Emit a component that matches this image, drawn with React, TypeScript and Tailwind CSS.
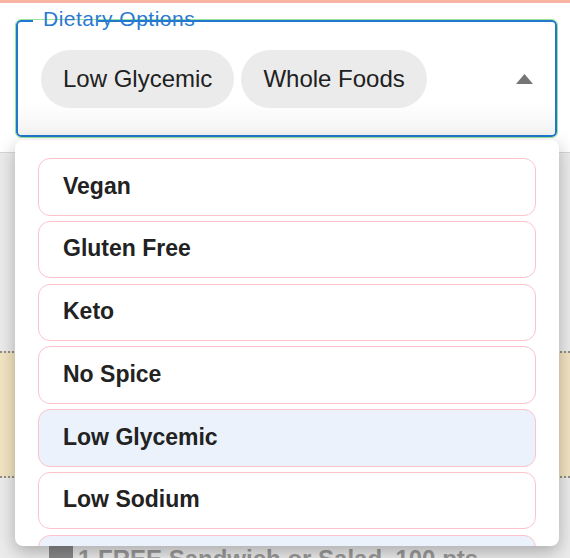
import React from "react";

const items = [
  { label: "Vegan", selected: false },
  { label: "Gluten Free", selected: false },
  { label: "Keto", selected: false },
  { label: "No Spice", selected: false },
  { label: "Low Glycemic", selected: true },
  { label: "Low Sodium", selected: false },
  { label: "Whole Foods", selected: true },
];

export default function App() {
  return (
    <div
      className="relative w-[570px] h-[558px] overflow-hidden bg-white flex flex-col"
      style={{ fontFamily: '"Liberation Sans", Arial, sans-serif' }}
    >
      {/* top accent */}
      <div className="h-[3px] bg-[#f9b5a3] shrink-0" />

      {/* select field */}
      <div className="pl-[16px] pr-[13px] pt-[17px] shrink-0">
        <div className="relative h-[117px] rounded-[5px] border-2 border-[#1f77d0] outline outline-1 outline-[#9be39b] bg-[linear-gradient(to_bottom,#ffffff_72%,#f3f3f3)] flex items-center pl-[23px] pr-[22px] gap-[7px]">
          <span className="absolute top-[-2px] left-[15px] w-[65px] h-[2px] bg-white" />
          <span className="absolute top-[-15px] left-[25px] text-[21px] leading-[24px] tracking-[0.5px] text-[#2a7ad0]">
            Dietary Options
          </span>
          <div className="h-[58px] px-[22px] rounded-full bg-[#ebebeb] flex items-center text-[24px] text-[#212121]">
            Low Glycemic
          </div>
          <div className="h-[58px] px-[22px] rounded-full bg-[#ebebeb] flex items-center text-[24px] text-[#212121]">
            Whole Foods
          </div>
          <svg className="ml-auto" width="17" height="10" viewBox="0 0 17 10">
            <polygon points="0,10 8.5,0 17,10" fill="#757575" />
          </svg>
        </div>
      </div>

      {/* page behind */}
      <div className="h-[15px] shrink-0" />
      <div className="flex-1 flex flex-col border-t border-[#d6d6d6] bg-[#ececec]">
        <div className="h-[198px] shrink-0" />
        <div className="h-[127px] shrink-0 bg-[#f3e5c2] border-y-2 border-dotted border-[#8f8f8f]" />
        <div className="h-[67px] shrink-0" />
        <div className="flex items-start gap-[5px] pl-[49px]">
          <div className="w-[24px] h-[24px] bg-[#8a8a8a]" />
          <span className="text-[24px] font-bold text-[#9a9a9a] leading-[34px] mt-[-3px]">
            1 FREE Sandwich or Salad. 100 pts
          </span>
        </div>
      </div>

      {/* dropdown menu */}
      <div className="absolute left-[15px] top-[140px] w-[544px] h-[406px] bg-white rounded-[8px] shadow-[0_6px_18px_rgba(0,0,0,0.28)] overflow-hidden">
        <div className="flex flex-col gap-[5.3px] pt-[18px] px-[23px]">
          {items.map((it) => (
            <div
              key={it.label}
              className={
                it.selected
                  ? "h-[57.5px] shrink-0 rounded-[12px] border border-[#fcc3cd] bg-[#ebf2fb] flex items-center pl-[24px] pb-[2px] text-[23px] font-bold text-[#222222]"
                  : "h-[57.5px] shrink-0 rounded-[12px] border border-[#fcc3cd] bg-white flex items-center pl-[24px] pb-[2px] text-[23px] font-bold text-[#222222]"
              }
            >
              {it.label}
            </div>
          ))}
        </div>
      </div>
    </div>
  );
}
